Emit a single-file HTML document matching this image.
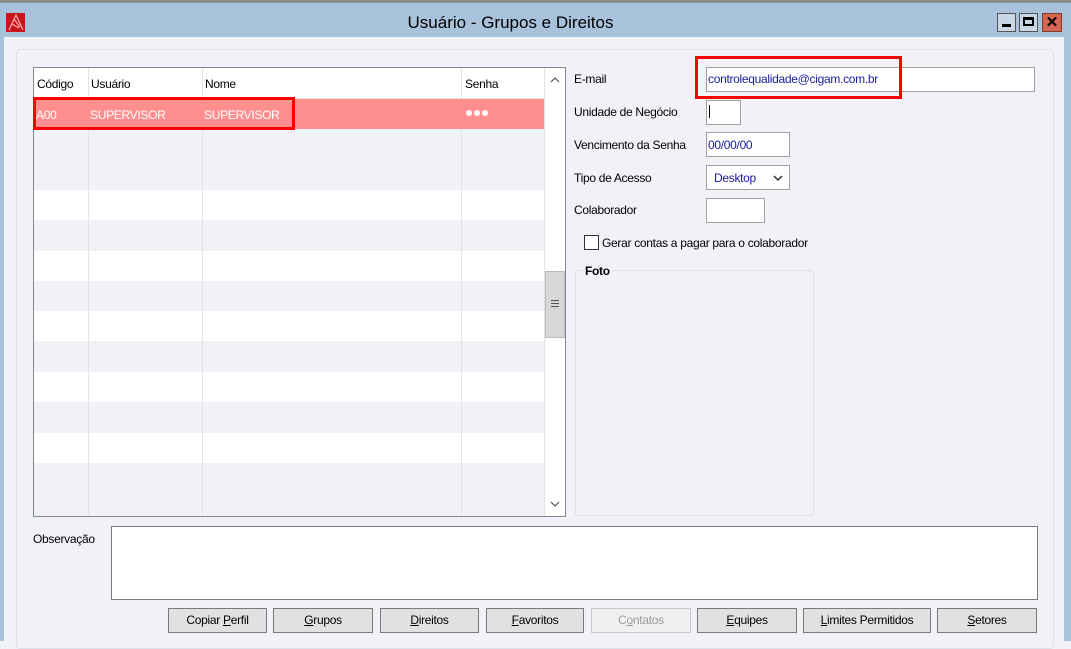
<!DOCTYPE html>
<html><head><meta charset="utf-8"><style>
*{box-sizing:border-box;margin:0;padding:0}
body{width:1071px;height:641px;overflow:hidden;background:#f0f2f8;font-family:"Liberation Sans",sans-serif;font-size:12px;color:#000;position:relative}
.a{position:absolute}
.t{position:absolute;white-space:nowrap;letter-spacing:-0.3px}
.btn{position:absolute;top:608px;height:25px;border:1px solid #7a7a7a;background:#e1e1e1;text-align:center;line-height:23px;font-size:12px;letter-spacing:-0.3px}
.in{position:absolute;background:#fff;border:1px solid #a0a0a0}
.dot{position:absolute;top:42px;width:6px;height:6px;border-radius:50%;background:#fff}
</style></head><body>
<div class="a" style="left:0;top:0;width:1071px;height:3px;background:#8a8a8a"></div>
<div class="a" style="left:0;top:3px;width:1071px;height:34px;background:#a9c2dc"></div>
<div class="a" style="left:0;top:37px;width:4px;height:604px;background:#a9c2dc"></div>
<div class="a" style="left:1064px;top:37px;width:7px;height:604px;background:#a9c2dc"></div>
<svg class="a" style="left:6px;top:13px" width="19" height="19" viewBox="0 0 19 19"><rect width="19" height="19" fill="#c8141a"/><path d="M3 17 L10 2 L17 17 M6 11 L13 15 M8 6 L14 14" stroke="#ffb0b0" stroke-width="1.2" fill="none"/></svg>
<div class="t" style="left:0;width:1021px;top:13px;text-align:center;font-size:17px;color:#000;letter-spacing:0">Usuário - Grupos e Direitos</div>
<div class="a" style="left:997px;top:13px;width:19px;height:19px;border:1px solid #555;background:#c8d6e6"><div class="a" style="left:4px;top:10px;width:9px;height:3px;background:#000"></div></div>
<div class="a" style="left:1019px;top:13px;width:19px;height:19px;border:1px solid #555;background:#c8d6e6"><div class="a" style="left:3px;top:3px;width:11px;height:9px;border:2px solid #000;border-top-width:3px"></div></div>
<div class="a" style="left:1042px;top:13px;width:20px;height:19px;border:1px solid #8a3a2a;background:#d26650;color:#000;font-weight:bold;font-size:15px;text-align:center;line-height:17px">✕</div>
<div class="a" style="left:16px;top:49px;width:1038px;height:600px;border:1px solid #dde0e8;border-radius:4px"></div>
<!-- grid -->
<div class="a" style="left:33px;top:67px;width:533px;height:450px;border:1px solid #828790;background:#f0f2f8;overflow:hidden">
<div class="a" style="left:0;top:0;width:511px;height:31px;background:#fff;border-bottom:1px solid #e6e6e6"></div>
<div class="t" style="left:3px;top:9px">Código</div><div class="t" style="left:57px;top:9px">Usuário</div><div class="t" style="left:171px;top:9px">Nome</div><div class="t" style="left:431px;top:9px">Senha</div>
<div class="a" style="left:0;top:122px;width:511px;height:30px;background:#fff"></div>
<div class="a" style="left:0;top:183px;width:511px;height:30px;background:#fff"></div>
<div class="a" style="left:0;top:243px;width:511px;height:30px;background:#fff"></div>
<div class="a" style="left:0;top:304px;width:511px;height:30px;background:#fff"></div>
<div class="a" style="left:0;top:365px;width:511px;height:30px;background:#fff"></div>
<div class="a" style="left:54px;top:0;width:1px;height:450px;background:#e3e3e3"></div>
<div class="a" style="left:168px;top:0;width:1px;height:450px;background:#e3e3e3"></div>
<div class="a" style="left:427px;top:0;width:1px;height:450px;background:#e3e3e3"></div>
<div class="a" style="left:0;top:31px;width:511px;height:30px;background:#ff8f8f"></div>
<div class="t" style="left:2px;top:40px;color:#fff">A00</div><div class="t" style="left:56px;top:40px;color:#fff">SUPERVISOR</div><div class="t" style="left:170px;top:40px;color:#fff">SUPERVISOR</div>
<div class="dot" style="left:432px"></div><div class="dot" style="left:440px"></div><div class="dot" style="left:448px"></div>
<div class="a" style="left:510px;top:0;width:22px;height:450px;background:#fff;border-left:1px solid #e3e3e3"></div>
<svg class="a" style="left:516px;top:8px" width="10" height="8"><path d="M1 6 L5 2 L9 6" stroke="#555" stroke-width="1.2" fill="none"/></svg>
<div class="a" style="left:511px;top:203px;width:20px;height:67px;background:#d8d8d8;border:1px solid #bbb"><div class="a" style="left:5px;top:28px;width:8px;height:1px;background:#555;box-shadow:0 3px 0 #555,0 6px 0 #555"></div></div>
<svg class="a" style="left:516px;top:432px" width="10" height="8"><path d="M1 2 L5 6 L9 2" stroke="#555" stroke-width="1.2" fill="none"/></svg>
</div>
<div class="a" style="left:33px;top:97px;width:262px;height:33px;border:3px solid #ff0000"></div>
<!-- right form -->
<div class="t" style="left:574px;top:72px">E-mail</div>
<div class="in" style="left:706px;top:67px;width:329px;height:25px"></div>
<div class="t" style="left:708px;top:72px;color:#1a1aa0">controlequalidade@cigam.com.br</div>
<div class="a" style="left:695px;top:56px;width:207px;height:43px;border:3px solid #ff0000"></div>
<div class="t" style="left:574px;top:105px">Unidade de Negócio</div>
<div class="in" style="left:706px;top:100px;width:35px;height:25px"><div class="a" style="left:2px;top:4px;width:1px;height:13px;background:#000"></div></div>
<div class="t" style="left:574px;top:138px">Vencimento da Senha</div>
<div class="in" style="left:706px;top:132px;width:84px;height:25px"></div>
<div class="t" style="left:708px;top:138px;color:#1a1aa0">00/00/00</div>
<div class="t" style="left:574px;top:171px">Tipo de Acesso</div>
<div class="in" style="left:706px;top:165px;width:84px;height:25px"></div>
<div class="t" style="left:714px;top:171px;color:#1a1aa0">Desktop</div>
<svg class="a" style="left:773px;top:174px" width="10" height="8"><path d="M1 2 L5 6 L9 2" stroke="#333" stroke-width="1.5" fill="none"/></svg>
<div class="t" style="left:574px;top:203px">Colaborador</div>
<div class="in" style="left:706px;top:198px;width:59px;height:25px"></div>
<div class="a" style="left:584px;top:235px;width:15px;height:15px;border:1px solid #333;background:#fff"></div>
<div class="t" style="left:602px;top:236px">Gerar contas a pagar para o colaborador</div>
<div class="a" style="left:575px;top:270px;width:239px;height:246px;border:1px solid #dcdfe6;border-radius:3px"></div>
<div class="t" style="left:583px;top:264px;font-weight:bold;background:#f0f2f8;padding:0 2px">Foto</div>
<div class="t" style="left:33px;top:532px">Observação</div>
<div class="in" style="left:111px;top:526px;width:927px;height:74px;border-color:#7a7a7a"></div>
<div class="btn" style="left:168px;width:99px">Copiar <u>P</u>erfil</div>
<div class="btn" style="left:273px;width:100px"><u>G</u>rupos</div>
<div class="btn" style="left:380px;width:99px"><u>D</u>ireitos</div>
<div class="btn" style="left:486px;width:98px"><u>F</u>avoritos</div>
<div class="btn" style="left:591px;width:100px;background:#f0f0f0;border-color:#c8c8c8;color:#9a9a9a">C<u>o</u>ntatos</div>
<div class="btn" style="left:697px;width:100px"><u>E</u>quipes</div>
<div class="btn" style="left:803px;width:128px"><u>L</u>imites Permitidos</div>
<div class="btn" style="left:937px;width:100px"><u>S</u>etores</div>
</body></html>
